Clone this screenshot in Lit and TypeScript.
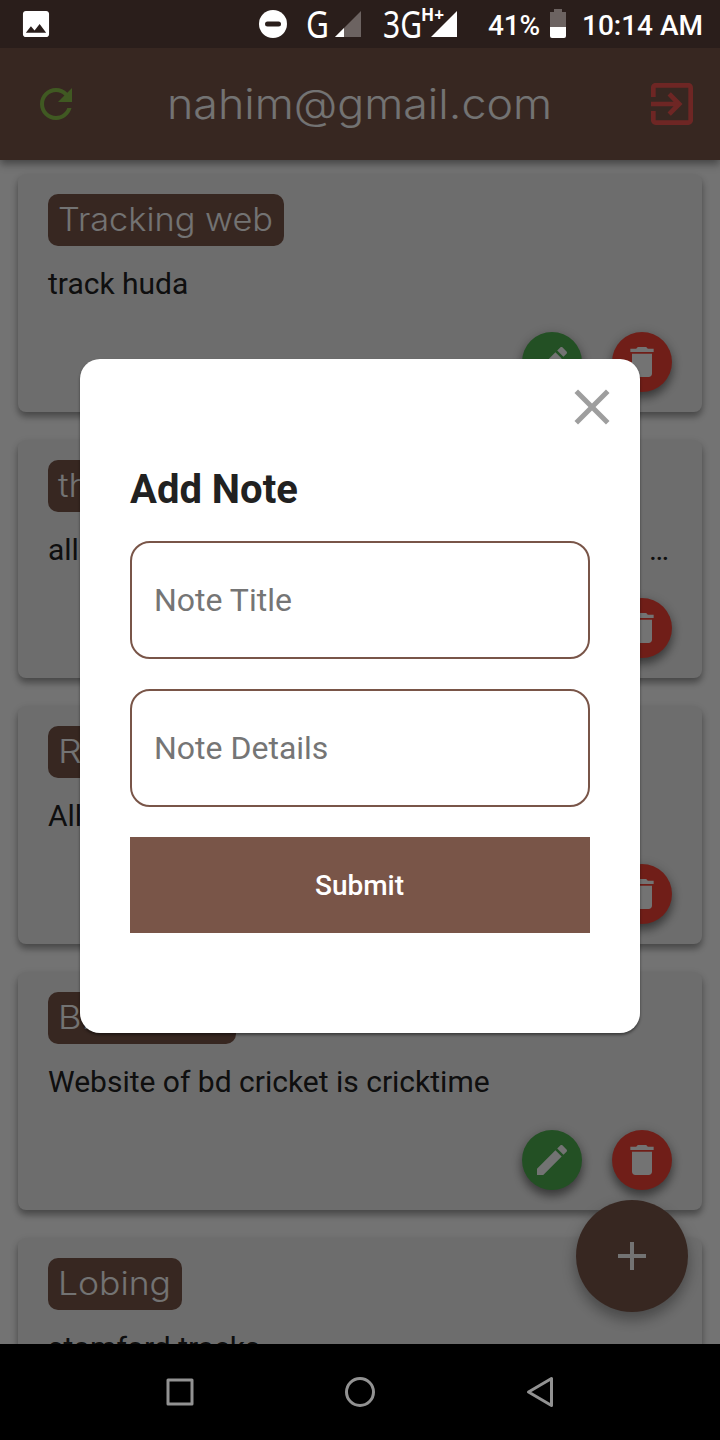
import { LitElement, html, svg, css } from "lit";
import { customElement, property } from "lit/decorators.js";

interface Note { title: string; width: number; chip: number; text: string; more?: boolean }

const NOTES: Note[] = [
  { title: "Tracking web", width: 215, chip: 236, text: "track huda" },
  { title: "things", width: 100, chip: 120, text: "all", more: true },
  { title: "Record", width: 124, chip: 144, text: "All" },
  { title: "BD cricket", width: 172, chip: 188, text: "Website of bd cricket is cricktime" },
  { title: "Lobing", width: 113, chip: 134, text: "stomford tracks" },
];

const PATHS: Record<string, string> = {
  refresh: "M17.65 6.35C16.2 4.9 14.21 4 12 4c-4.42 0-7.99 3.58-7.99 8s3.57 8 7.99 8c3.73 0 6.84-2.55 7.73-6h-2.08c-.82 2.33-3.04 4-5.65 4-3.31 0-6-2.69-6-6s2.69-6 6-6c1.66 0 3.14.69 4.22 1.78L13 11h7V4l-2.35 2.35z",
  exit: "M10.09 15.59L11.5 17l5-5-5-5-1.41 1.41L12.67 11H3v2h9.67l-2.58 2.59zM19 3H5c-1.11 0-2 .9-2 2v4h2V5h14v14H5v-4H3v4c0 1.1.89 2 2 2h14c1.1 0 2-.9 2-2V5c0-1.1-.9-2-2-2z",
  edit: "M3 17.25V21h3.75L17.81 9.94l-3.75-3.75L3 17.25zM20.71 7.04c.39-.39.39-1.02 0-1.41l-2.34-2.34c-.39-.39-1.02-.39-1.41 0l-1.83 1.83 3.75 3.75 1.83-1.83z",
  trash: "M6 19c0 1.1.9 2 2 2h8c1.1 0 2-.9 2-2V7H6v12zM19 4h-3.5l-1-1h-5l-1 1H5v2h14V4z",
  close: "M19 6.41L17.59 5 12 10.59 6.41 5 5 6.41 10.59 12 5 17.59 6.41 19 12 13.41 17.59 19 19 17.59 13.41 12z",
  add: "M19 13h-6v6h-2v-6H5v-2h6V5h2v6h6v2z",
  image: "M21 19V5c0-1.100-.9-2-2-2H5c-1.100 0-2 .9-2 2v14c0 1.100.9 2 2 2h14c1.100 0 2-.9 2-2zM8.500 13.500l2.500 3.010L14.500 12l4.500 6H5l3.500-4.500z",
};

const icon = (name: string, size: number) => html`<svg width=${size} height=${size} viewBox="0 0 24 24" fill="currentColor"><path d=${PATHS[name]}></path></svg>`;

@customElement("note-card")
class NoteCard extends LitElement {
  @property({ attribute: false }) note!: Note;
  static styles = css`
    :host { display: flex; flex-direction: column; flex: none; box-sizing: border-box; height: 238px; padding: 20px 30px; border-radius: 8px; background: #eee; color: #212121;
      box-shadow: 0 5px 6px rgba(0,0,0,.28), 0 3px 8px rgba(0,0,0,.14); }
    .chip { height: 52px; border-radius: 10px; background: #795548; overflow: hidden; }
    .chip svg { display: block; }
    .chip text { font: 350 32px Inter, sans-serif; fill: #fafafa; }
    .body { display: flex; justify-content: space-between; margin-top: 20px; font: 400 30px/35px Roboto, sans-serif; white-space: nowrap; }
    .more { margin-right: 3px; }
    .actions { display: flex; justify-content: flex-end; gap: 30px; margin-top: auto; }
    .btn { display: flex; align-items: center; justify-content: center; width: 60px; height: 60px; border-radius: 50%; color: #fafafa; box-shadow: 0 6px 10px rgba(0,0,0,.4), 0 2px 14px rgba(0,0,0,.18); }
    .edit { background: #4caf50; }
    .del { background: #f44336; }
  `;
  render() {
    const n = this.note;
    return html`
      <div class="chip" style="width:${n.chip}px"><svg width=${n.chip} height="52">${svg`<text x="10" y="36.500" textLength=${n.width} lengthAdjust="spacingAndGlyphs">${n.title}</text>`}</svg></div>
      <div class="body"><span>${n.text}</span>${n.more ? html`<span class="more">…</span>` : ""}</div>
      <div class="actions">
        <div class="btn edit">${icon("edit", 40)}</div>
        <div class="btn del">${icon("trash", 40)}</div>
      </div>`;
  }
}

@customElement("app-root")
class AppRoot extends LitElement {
  static styles = css`
    :host { display: flex; flex-direction: column; position: relative; width: 720px; height: 1440px; overflow: hidden; background: #fafafa; font-family: Roboto, sans-serif; }
    svg { display: block; flex: none; }
    .status { position: relative; z-index: 3; flex: none; height: 48px; background: #2a1e1b; }
    .status text { fill: #fff; font-family: Roboto, sans-serif; }
    .status .net { font-family: "Noto Sans", sans-serif; }
    .bar { position: relative; z-index: 1; flex: none; display: flex; align-items: center; justify-content: space-between; box-sizing: border-box; height: 112px; padding: 0 20px 0 32px; background: #795548; box-shadow: 0 4px 8px rgba(0,0,0,.4); }
    .bar text { font: 350 41px Inter, sans-serif; fill: #fafafa; }
    .refresh { color: #8bc34a; }
    .exit { color: #ef5350; }
    .list { flex: 1; min-height: 0; overflow: hidden; display: flex; flex-direction: column; gap: 28px; padding: 14px 18px 0; }
    .fab { position: absolute; z-index: 1; left: 576px; top: 1200px; width: 112px; height: 112px; border-radius: 50%; display: flex; align-items: center; justify-content: center; background: #795548; color: #fafafa; box-shadow: 0 6px 18px rgba(0,0,0,.2), 0 8px 12px rgba(0,0,0,.18); }
    .scrim { position: absolute; z-index: 2; inset: 0 0 96px; background: rgba(0,0,0,.54); }
    .dialog { position: absolute; z-index: 3; left: 80px; top: 359px; width: 560px; height: 674px; box-sizing: border-box; padding: 107px 50px 0; border-radius: 20px; background: #fff; box-shadow: 0 2px 3px rgba(0,0,0,.45); display: flex; flex-direction: column; }
    .close { position: absolute; right: 18px; top: 18px; color: #9e9e9e; width: 60px; height: 60px; display: flex; align-items: center; justify-content: center; }
    h1 { margin: 0 0 28px; font: 700 40px/47px Roboto, sans-serif; color: #212121; }
    .field { box-sizing: border-box; height: 118px; margin-bottom: 30px; border: 2px solid #795548; border-radius: 20px; padding: 0 22px; display: flex; align-items: center; font-size: 32px; color: #757575; }
    .submit { box-sizing: border-box; height: 96px; padding: 1px 1px 0 0; background: #795548; color: #fff; font: 500 28px/96px Roboto, sans-serif; text-align: center; }
    .nav { position: relative; z-index: 3; flex: none; display: flex; height: 96px; background: #000; }
  `;
  render() {
    return html`
      <div class="status"><svg width="720" height="48">${svg`
        <g transform="translate(18.600 6.600) scale(1.450)" fill="#fff"><path d=${PATHS.image}></path></g>
        <circle cx="273" cy="24" r="14" fill="#fff"></circle><rect x="265" y="21.500" width="16" height="5" rx="2.500" fill="#2a1e1b"></rect>
        <text class="net" x="306" y="37.500" font-size="38" textLength="23" lengthAdjust="spacingAndGlyphs">G</text>
        <path d="M361 11v26h-26z" fill="#6c6361"></path><path d="M344 28v9h-9z" fill="#fff"></path>
        <text class="net" x="383" y="37.500" font-size="38" textLength="39" lengthAdjust="spacingAndGlyphs">3G</text>
        <text class="net" x="421" y="20.500" font-size="17.500" font-weight="700" textLength="23" lengthAdjust="spacingAndGlyphs">H+</text>
        <path d="M457 11v26h-26z" fill="#fff"></path>
        <text x="488" y="35" font-size="28" font-weight="500" textLength="52">41%</text>
        <path d="M554 9h8v3h4v16h-16V12h4z" fill="#6c6361"></path><path d="M550 27h16v9q0 2-2 2h-12q-2 0-2-2z" fill="#fff"></path>
        <text x="582" y="35" font-size="28" font-weight="500" textLength="121">10:14 AM</text>`}</svg></div>
      <div class="bar">
        <div class="refresh">${icon("refresh", 48)}</div>
        <svg width="400" height="112">${svg`<text x="5" y="70.500" textLength="385" lengthAdjust="spacingAndGlyphs">nahim@gmail.com</text>`}</svg>
        <div class="exit">${icon("exit", 56)}</div>
      </div>
      <div class="list">${NOTES.map((n) => html`<note-card .note=${n}></note-card>`)}</div>
      <div class="fab">${icon("add", 48)}</div>
      <div class="scrim"></div>
      <div class="dialog">
        <div class="close">${icon("close", 60)}</div>
        <h1>Add Note</h1>
        <div class="field">Note Title</div>
        <div class="field">Note Details</div>
        <div class="submit">Submit</div>
      </div>
      <div class="nav"><svg width="720" height="96">${svg`
        <g fill="none" stroke="#929292" stroke-width="3" stroke-linejoin="round"><rect x="168" y="36" width="24" height="24"></rect>
        <circle cx="360" cy="48" r="13.500"></circle><path d="M551.500 34.500v27L528.500 48z"></path></g>`}</svg></div>`;
  }
}
